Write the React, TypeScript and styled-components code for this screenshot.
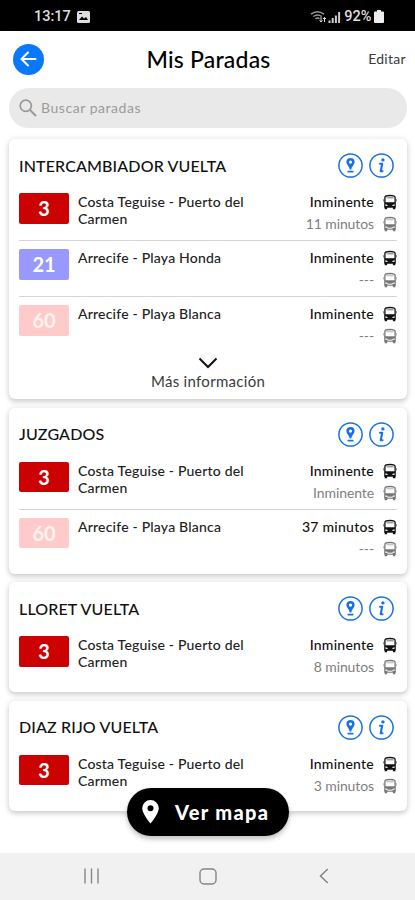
import React from "react";
import styled, { createGlobalStyle } from "styled-components";

const GlobalStyle = createGlobalStyle`
  *, *::before, *::after { box-sizing: border-box; }
  body { margin: 0; background: #fff; font-family: Lato, "Liberation Sans", sans-serif; color: #111; }
  button { font: inherit; color: inherit; border: 0; padding: 0; background: none; }
  svg { display: block; flex: none; }
`;

const Screen = styled.div`
  width: 415px;
  height: 900px;
  display: flex;
  flex-direction: column;
  overflow: hidden;
  background: #fff;
`;

const StatusBar = styled.div`
  height: 30.5px;
  flex: none;
  padding: 3px 31px 0 34px;
  display: flex;
  align-items: center;
  justify-content: space-between;
  background: #000;
  color: #dedede;
  font: 500 14.5px Roboto, sans-serif;
`;

const StatusGroup = styled.div<{ $gap: number }>`
  display: flex;
  align-items: center;
  gap: ${(p) => p.$gap}px;
`;

const Header = styled.header`
  height: 57.5px;
  flex: none;
  padding: 0 9px 0 13px;
  display: grid;
  grid-template-columns: 60px 1fr 60px;
  align-items: center;
`;

const BackButton = styled.button`
  width: 31px;
  height: 31px;
  border-radius: 50%;
  background: #0a78fb;
  display: grid;
  place-items: center;
`;

const Title = styled.h1`
  margin: 0;
  padding-right: 2px;
  text-align: center;
  font-size: 23px;
  line-height: 28px;
  font-weight: 500;
  letter-spacing: 0.2px;
  color: #000;
`;

const EditButton = styled.button`
  justify-self: end;
  margin-top: -1px;
  font-size: 14px;
  letter-spacing: 0.3px;
  color: #3a3a3a;
`;

const SearchBox = styled.div`
  flex: none;
  height: 40px;
  margin: 0 8px 0 9px;
  padding: 0 0 1px 10px;
  border-radius: 20px;
  background: #e9e9e9;
  display: flex;
  align-items: center;
  gap: 4px;
  font-size: 14px;
  line-height: 18px;
  letter-spacing: 0.55px;
  color: #9b9b9b;
`;

const StopList = styled.main`
  flex: 1;
  min-height: 0;
  padding: 11px 8px 0 9px;
  display: flex;
  flex-direction: column;
  gap: 8.5px;
`;

const Card = styled.section`
  flex: none;
  border-radius: 6px;
  background: #fff;
  box-shadow: 0 1px 6px 1px rgba(0, 0, 0, 0.11), 0 3px 4px rgba(0, 0, 0, 0.1);
`;

const CardHeader = styled.div`
  height: 54px;
  padding: 0 13px 1px 10px;
  display: flex;
  align-items: center;
`;

const StopName = styled.h2`
  margin: -1px 0 0;
  flex: 1;
  font-size: 16px;
  font-weight: 500;
  letter-spacing: 0.14px;
  white-space: nowrap;
  color: #111;
`;

const CardActions = styled.div`
  display: flex;
  gap: 6px;
`;

const Row = styled.div`
  height: 56px;
  margin: 0 10px;
  display: grid;
  grid-template-columns: 50px 1fr auto;
  column-gap: 9px;
  align-items: start;
  background: linear-gradient(#d4d4d4, #d4d4d4) 0 47px / 100% 1px no-repeat;
  &:last-of-type { background: none; }
`;

const Badge = styled.div<{ $color: string; $ink: string }>`
  height: 30.5px;
  border-radius: 2px;
  display: grid;
  place-items: center;
  background: ${(p) => p.$color};
  color: ${(p) => p.$ink};
  font-size: 20px;
  line-height: 30px;
  font-weight: 700;
`;

const Route = styled.div`
  width: 180px;
  font-size: 14px;
  line-height: 17.3px;
  font-weight: 500;
  letter-spacing: 0.2px;
  color: #222;
`;

const Arrivals = styled.div`
  display: flex;
  flex-direction: column;
`;

const Arrival = styled.div<{ $next?: boolean }>`
  height: 22px;
  margin-top: ${(p) => (p.$next ? "-2px" : "0")};
  display: flex;
  align-items: center;
  justify-content: flex-end;
  gap: 9px;
  font-size: 14px;
  line-height: 18px;
  letter-spacing: ${(p) => (p.$next ? 0.25 : -0.1)}px;
  font-weight: ${(p) => (p.$next ? 500 : 400)};
  color: ${(p) => (p.$next ? "#111" : "#808080")};
`;

const MoreButton = styled.button`
  width: 100%;
  height: 38px;
  display: flex;
  flex-direction: column;
  align-items: center;
  justify-content: flex-start;
  font-size: 15px;
  line-height: 18px;
  letter-spacing: 0.3px;
  color: #3a3a3a;
  svg { margin: -4px 0 3px; }
`;

const Footer = styled.footer`
  position: relative;
  flex: none;
  height: 47.5px;
  padding: 0 86px 0 82px;
  display: grid;
  grid-template-columns: 1fr auto 1fr;
  align-items: center;
  background: #f1f1f1;
  > svg:last-child { justify-self: end; }
`;

const HomeIcon = styled.svg`
  margin-left: 4px;
`;

const MapButton = styled.button`
  position: absolute;
  left: 127px;
  bottom: 64.5px;
  width: 162px;
  height: 48px;
  padding: 0 0 0 15px;
  border-radius: 24px;
  display: flex;
  align-items: center;
  gap: 16px;
  background: #000;
  color: #fff;
  font-size: 20px;
  font-weight: 900;
  letter-spacing: 1.3px;
  white-space: nowrap;
  box-shadow: 0 3px 5px rgba(0, 0, 0, 0.25);
`;

const BusIcon = ({ dark }: { dark?: boolean }) => {
  const c = dark ? "#111" : "#777";
  return (
    <svg width="14" height="16" viewBox="0 0 14 16">
      <path d="M1.900 8.800V3.400Q1.900 1.500 7 1.500T12.100 3.400V8.800" fill="none" stroke={c} strokeWidth="1.300" />
      <path d="M3.500 3.800H10.500" stroke={c} strokeWidth=".6" />
      <path d="M.7 5.200V7.500M13.300 5.200V7.500" stroke={c} strokeWidth=".6" />
      <path fillRule="evenodd" fill={c} d="M1.200 8.300H12.800V13.800H12.300V15.300H9.900V13.800H4.100V15.300H1.700V13.800H1.200ZM2.400 10.200V11.700L4.600 12V11ZM11.600 10.200V11.700L9.400 12V11Z" />
      {!dark && <path d="M4.500 12.200H9.500" stroke="#fff" strokeWidth="1" />}
    </svg>
  );
};

const PinAction = () => (
  <svg width="25" height="25" viewBox="0 0 25 25">
    <circle cx="12.500" cy="12.500" r="11.600" fill="none" stroke="#1772e6" strokeWidth="1.500" />
    <path fill="#1772e6" fillRule="evenodd" d="M12.500 5a4.100 4.100 0 0 0-4.100 4.100c0 2.700 2.900 4.200 3.200 7.500h1.800c.3-3.300 3.200-4.800 3.200-7.500A4.100 4.100 0 0 0 12.500 5Zm0 2.500a1.600 1.600 0 1 1 0 3.200 1.600 1.600 0 0 1 0-3.200Z" />
    <path d="M10.200 18.600H14.800" stroke="#1772e6" strokeWidth="1.700" strokeLinecap="round" />
  </svg>
);

const InfoAction = () => (
  <svg width="25" height="25" viewBox="0 0 25 25">
    <circle cx="12.500" cy="12.500" r="11.600" fill="none" stroke="#1772e6" strokeWidth="1.500" />
    <circle cx="13.900" cy="6.900" r="1.700" fill="#1772e6" />
    <path d="M11 10.700H13.200L11.700 18.200H13.500" fill="none" stroke="#1772e6" strokeWidth="2.100" strokeLinejoin="round" strokeLinecap="round" />
  </svg>
);

const LINES = {
  "3": { color: "#cc0202", ink: "#fff", route: "Costa Teguise - Puerto del Carmen" },
  "21": { color: "#9999fd", ink: "#fff", route: "Arrecife - Playa Honda" },
  "60": { color: "#ffcaca", ink: "#fff4f1", route: "Arrecife - Playa Blanca" },
};

type Service = { line: keyof typeof LINES; next: string; later: string };

const STOPS: { name: string; services: Service[]; more?: boolean }[] = [
  {
    name: "INTERCAMBIADOR VUELTA",
    more: true,
    services: [
      { line: "3", next: "Inminente", later: "11 minutos" },
      { line: "21", next: "Inminente", later: "---" },
      { line: "60", next: "Inminente", later: "---" },
    ],
  },
  {
    name: "JUZGADOS",
    services: [
      { line: "3", next: "Inminente", later: "Inminente" },
      { line: "60", next: "37 minutos", later: "---" },
    ],
  },
  { name: "LLORET VUELTA", services: [{ line: "3", next: "Inminente", later: "8 minutos" }] },
  { name: "DIAZ RIJO VUELTA", services: [{ line: "3", next: "Inminente", later: "3 minutos" }] },
];

export default function App() {
  return (
    <>
      <GlobalStyle />
      <Screen>
        <StatusBar>
          <StatusGroup $gap={6}>
            13:17
            <svg width="13" height="12" viewBox="0 0 13 12">
              <rect width="13" height="12" rx="1.5" fill="#dedede" />
              <path d="M2 9 5 5.5 7 7.5 9 6 11 9Z" fill="#000" />
              <path d="M2 2.5H5" stroke="#000" />
            </svg>
          </StatusGroup>
          <StatusGroup $gap={2.5}>
            <svg width="32" height="14" viewBox="0 0 32 14">
              <path d="M1 4.2Q7.500-.8 14 4.200M3.300 6.500Q7.500 3.300 11.700 6.500M5.500 8.800Q7.500 7.200 9.500 8.800" fill="none" stroke="#999" strokeWidth="1.500" />
              <path d="M11 7V12M9.500 10.500 11 12 12.500 10.500M14.500 12V7.500M13 9 14.500 7.500 16 9" fill="none" stroke="#ddd" />
              <path d="M19.500 13V10.500M22.700 13V8M25.900 13V5.500M29.100 13V2" stroke="#ccc" strokeWidth="2" />
            </svg>
            92%
            <svg width="10" height="13" viewBox="0 0 10 13">
              <path d="M3 0H7V1.500H9Q10 1.500 10 2.500V12Q10 13 9 13H1Q0 13 0 12V2.500Q0 1.500 1 1.500H3Z" fill="#eee" />
            </svg>
          </StatusGroup>
        </StatusBar>
        <Header>
          <BackButton aria-label="Volver">
            <svg width="17" height="16" viewBox="0 0 17 16">
              <path d="M15.500 8H2M8 1.500 1.500 8 8 14.500" fill="none" stroke="#fff" strokeWidth="2" strokeLinecap="round" strokeLinejoin="round" />
            </svg>
          </BackButton>
          <Title>Mis Paradas</Title>
          <EditButton>Editar</EditButton>
        </Header>
        <SearchBox>
          <svg width="18" height="18" viewBox="0 0 18 18">
            <circle cx="6.800" cy="6.800" r="5.600" fill="none" stroke="#999" strokeWidth="1.700" />
            <path d="M11 11 17 17" stroke="#999" strokeWidth="2" />
          </svg>
          Buscar paradas
        </SearchBox>
        <StopList>
          {STOPS.map((stop) => (
            <Card key={stop.name}>
              <CardHeader>
                <StopName>{stop.name}</StopName>
                <CardActions>
                  <PinAction />
                  <InfoAction />
                </CardActions>
              </CardHeader>
              {stop.services.map((s) => (
                <Row key={s.line}>
                  <Badge $color={LINES[s.line].color} $ink={LINES[s.line].ink}>{s.line}</Badge>
                  <Route>{LINES[s.line].route}</Route>
                  <Arrivals>
                    <Arrival $next>{s.next}<BusIcon dark /></Arrival>
                    <Arrival>{s.later}<BusIcon /></Arrival>
                  </Arrivals>
                </Row>
              ))}
              {stop.more && (
                <MoreButton>
                  <svg width="20" height="12" viewBox="0 0 20 12">
                    <path d="M1.500 1.500 10 10 18.500 1.500" fill="none" stroke="#111" strokeWidth="2" />
                  </svg>
                  Más información
                </MoreButton>
              )}
            </Card>
          ))}
        </StopList>
        <Footer>
          <svg width="18" height="16" viewBox="0 0 18 16">
            <path d="M3 .5V15.500M9.500.5V15.500M16 .5V15.500" stroke="#858585" strokeWidth="1.400" />
          </svg>
          <HomeIcon width="18" height="17" viewBox="0 0 18 17">
            <rect x="1" y="1" width="16" height="15" rx="4" fill="none" stroke="#858585" strokeWidth="1.400" />
          </HomeIcon>
          <MapButton>
            <svg width="17" height="24" viewBox="0 0 17 24">
              <path fillRule="evenodd" fill="#fff" d="M8.500 0A8.300 8.300 0 0 0 .2 8.300C.2 14 8.500 23.500 8.500 23.500S16.800 14 16.800 8.300A8.300 8.300 0 0 0 8.500 0Zm0 5.300a3 3 0 1 1 0 6 3 3 0 0 1 0-6Z" />
            </svg>
            Ver mapa
          </MapButton>
          <svg width="10" height="16" viewBox="0 0 10 16">
            <path d="M8.800 1 1.500 8 8.800 15" fill="none" stroke="#858585" strokeWidth="1.500" />
          </svg>
        </Footer>
      </Screen>
    </>
  );
}
